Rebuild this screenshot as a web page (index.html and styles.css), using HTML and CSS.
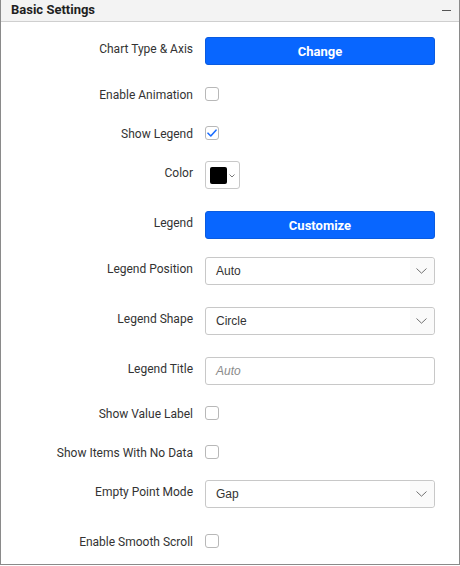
FILE: index.html
```html
<!DOCTYPE html>
<html>
<head>
<meta charset="utf-8">
<link rel="stylesheet" href="styles.css">
</head>
<body>
<div class="panel">
  <div class="panel-header">
    <span class="panel-title">Basic Settings</span>
    <span class="collapse-icon"></span>
  </div>
  <div class="panel-body">
    <div class="row gap-15">
      <label class="row-label">Chart Type &amp; Axis</label>
      <button class="btn-primary">Change</button>
    </div>
    <div class="row row-check gap-15">
      <label class="row-label">Enable Animation</label>
      <span class="checkbox"></span>
    </div>
    <div class="row row-check gap-11">
      <label class="row-label">Show Legend</label>
      <span class="checkbox checked">
        <svg width="10" height="8" viewBox="0 0 10 8"><path d="M1 4.2 L3.8 7 L9 1.2" fill="none" stroke="#1a6dff" stroke-width="1.6" stroke-linecap="round" stroke-linejoin="round"/></svg>
      </span>
    </div>
    <div class="row gap-14">
      <label class="row-label">Color</label>
      <span class="color-picker">
        <span class="swatch"></span>
        <svg class="mini-chevron" width="6" height="4" viewBox="0 0 6 4"><path d="M0.5 0.5 L3 3 L5.5 0.5" fill="none" stroke="#6a6a6a" stroke-width="0.9"/></svg>
      </span>
    </div>
    <div class="row gap-22">
      <label class="row-label">Legend</label>
      <button class="btn-primary">Customize</button>
    </div>
    <div class="row gap-18">
      <label class="row-label">Legend Position</label>
      <div class="select">
        <span class="select-value">Auto</span>
        <span class="select-arrow"><svg width="11" height="6" viewBox="0 0 11 6"><path d="M0.5 0.5 L5.5 5.2 L10.5 0.5" fill="none" stroke="#707070" stroke-width="1"/></svg></span>
      </div>
    </div>
    <div class="row gap-22">
      <label class="row-label">Legend Shape</label>
      <div class="select">
        <span class="select-value">Circle</span>
        <span class="select-arrow"><svg width="11" height="6" viewBox="0 0 11 6"><path d="M0.5 0.5 L5.5 5.2 L10.5 0.5" fill="none" stroke="#707070" stroke-width="1"/></svg></span>
      </div>
    </div>
    <div class="row gap-22">
      <label class="row-label">Legend Title</label>
      <div class="text-input"><span class="placeholder">Auto</span></div>
    </div>
    <div class="row row-check gap-14">
      <label class="row-label">Show Value Label</label>
      <span class="checkbox"></span>
    </div>
    <div class="row row-check gap-11">
      <label class="row-label">Show Items With No Data</label>
      <span class="checkbox"></span>
    </div>
    <div class="row gap-14">
      <label class="row-label">Empty Point Mode</label>
      <div class="select">
        <span class="select-value">Gap</span>
        <span class="select-arrow"><svg width="11" height="6" viewBox="0 0 11 6"><path d="M0.5 0.5 L5.5 5.2 L10.5 0.5" fill="none" stroke="#707070" stroke-width="1"/></svg></span>
      </div>
    </div>
    <div class="row row-check gap-19">
      <label class="row-label">Enable Smooth Scroll</label>
      <span class="checkbox"></span>
    </div>
  </div>
</div>
</body>
</html>
```

FILE: styles.css
```css
html, body {
  margin: 0;
  padding: 0;
  background: #ffffff;
}

.panel {
  box-sizing: border-box;
  width: 460px;
  height: 565px;
  border-left: 1px solid #8a8a8a;
  border-right: 1px solid #8a8a8a;
  border-bottom: 1px solid #8a8a8a;
  background: #ffffff;
  font-family: Roboto, "Liberation Sans", sans-serif;
}

.panel-header {
  box-sizing: border-box;
  height: 22px;
  background: #f3f3f3;
  border-bottom: 1px solid #cfcfcf;
  display: flex;
  align-items: center;
  justify-content: space-between;
  padding: 0 8px 3px 10px;
}

.panel-title {
  font-size: 13px;
  font-weight: 700;
  color: #1f1f1f;
}

.collapse-icon {
  width: 9px;
  height: 1.5px;
  background: #555555;
  margin-top: 3px;
}

.row {
  display: grid;
  grid-template-columns: 192px 230px;
  column-gap: 12px;
  align-items: center;
  height: 28px;
}

.gap-11 { margin-top: 11px; }
.gap-14 { margin-top: 14px; }
.gap-15 { margin-top: 15px; }
.gap-18 { margin-top: 18px; }
.gap-19 { margin-top: 19px; }
.gap-22 { margin-top: 22px; }

.row-label {
  text-align: right;
  font-size: 12px;
  color: #333333;
  padding-bottom: 4px;
}

.row-check .row-label {
  padding-bottom: 0;
  padding-top: 2px;
}

.btn-primary {
  box-sizing: border-box;
  width: 230px;
  height: 28px;
  background: #0866ff;
  border: 1px solid #0a5be0;
  border-radius: 3px;
  color: #ffffff;
  font-family: Roboto, "Liberation Sans", sans-serif;
  font-size: 13px;
  font-weight: 700;
  padding: 0;
}

.checkbox {
  box-sizing: border-box;
  width: 14px;
  height: 14px;
  border: 1px solid #b8b8b8;
  border-radius: 3px;
  background: #ffffff;
  display: flex;
  align-items: center;
  justify-content: center;
}

.color-picker {
  box-sizing: border-box;
  width: 35px;
  height: 28px;
  border: 1px solid #c8c8c8;
  border-radius: 3px;
  display: flex;
  align-items: center;
  padding-left: 4px;
  gap: 2px;
}

.swatch {
  width: 17px;
  height: 17px;
  background: #000000;
  border-radius: 2px;
}

.mini-chevron {
  margin-top: 1px;
}

.select, .text-input {
  box-sizing: border-box;
  width: 230px;
  height: 28px;
  border: 1px solid #c8c8c8;
  border-radius: 3px;
  display: flex;
  align-items: center;
  font-family: "Liberation Sans", Arial, sans-serif;
  font-size: 12px;
  color: #333333;
}

.select-value {
  flex: 1;
  padding-left: 10px;
}

.select-arrow {
  width: 23px;
  align-self: stretch;
  background: #fafafa;
  border-radius: 0 3px 3px 0;
  display: flex;
  align-items: center;
  justify-content: center;
  padding-right: 1px;
}

.placeholder {
  padding-left: 10px;
  font-style: italic;
  color: #8a8a8a;
}
```
